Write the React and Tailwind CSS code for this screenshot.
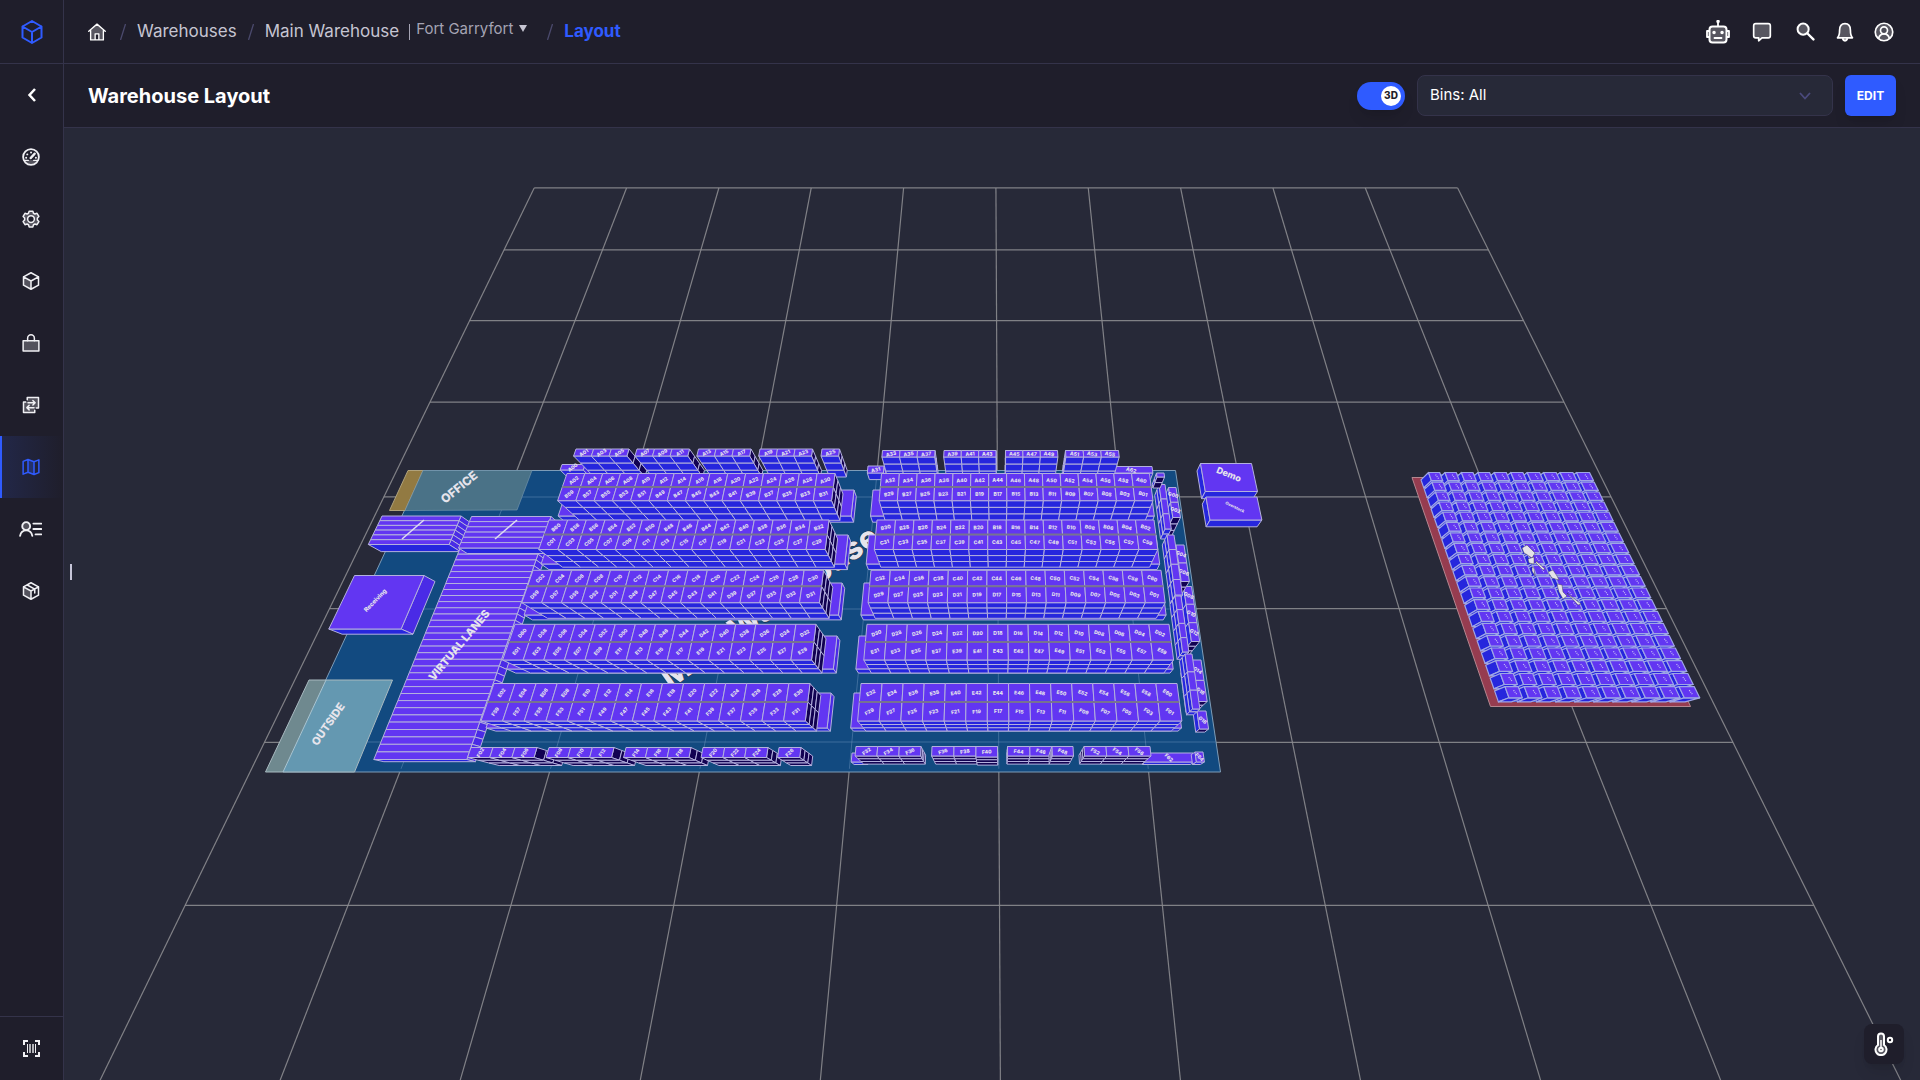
import React from "react";

/* ---------- camera ---------- */
const F = 625;
const SIN = 0.908;
const COS = 0.4187;
const CAM_H = 4.26;
const CX = 998;
const CY = 604;
const ROLL = 0.005;

// world (u across, d distance from the camera, z up) to drawing coordinates
function project(u, d, z) {
  const h = CAM_H - z;
  const depth = d * COS + h * SIN;
  const up = d * SIN - h * COS;
  const y = CY - (F * up) / depth;
  const x = CX + (F * u) / depth + ROLL * (y - CY);
  return [x, y];
}

// drawing coordinates on the plane at height z back to world
function locate(x, y, z) {
  const h = CAM_H - z;
  const t = (CY - y) / F;
  const d = (h * (COS + t * SIN)) / (SIN - t * COS);
  const depth = d * COS + h * SIN;
  return [((x - ROLL * (y - CY) - CX) * depth) / F, d];
}

const pts = (list) => list.map(([x, y]) => x.toFixed(1) + "," + y.toFixed(1)).join(" ");
const tilt = (x, y) => (Math.atan2(x - 998, 892 - y) * 180 * 0.8) / Math.PI;

const TOP = "#6236f2";
const FRONT = "#2626dd";
const SIDE = "#4a2be6";
const DARK = "#120252";
const EDGE = "#b3b0dd";

function Tag({ x, y, size, children, angle }) {
  return (
    <text
      x={x}
      y={y}
      fontSize={size}
      fontWeight="800"
      fill="#e6e4ec"
      textAnchor="middle"
      dominantBaseline="central"
      transform={"rotate(" + (angle === undefined ? tilt(x, y) : angle).toFixed(1) + " " + x.toFixed(1) + " " + y.toFixed(1) + ")"}
    >
      {children}
    </text>
  );
}

/* A block of bins: cols x rows on top, stacked in levels. xl/xr lie on the back edge of the top. */
function Block({ xl, xr, yb, yf, z = 0.275, z0 = 0, cols = 1, rows = 1, levels = 1, top = TOP, front = FRONT, side = SIDE, labels, edge = EDGE, size = 5, midLine }) {
  const [u0, d0] = locate(xl, yb, z);
  const [u1] = locate(xr, yb, z);
  const [, d1] = locate(xl, yf, z);
  const U = (i) => u0 + ((u1 - u0) * i) / cols;
  const D = (j) => d0 + ((d1 - d0) * j) / rows;
  const Z = (k) => z - ((z - z0) * k) / levels;
  const out = [];
  const sideU = u1 < 0 ? u1 : u0 > 0 ? u0 : null;
  if (sideU !== null) {
    for (let j = 0; j < rows; j++)
      for (let k = 0; k < levels; k++)
        out.push(
          <polygon
            key={"s" + j + "-" + k}
            fill={side}
            points={pts([project(sideU, D(j), Z(k)), project(sideU, D(j + 1), Z(k)), project(sideU, D(j + 1), Z(k + 1)), project(sideU, D(j), Z(k + 1))])}
          />
        );
  }
  for (let i = 0; i < cols; i++)
    for (let k = 0; k < levels; k++)
      out.push(
        <polygon
          key={"f" + i + "-" + k}
          fill={front}
          points={pts([project(U(i), d1, Z(k)), project(U(i + 1), d1, Z(k)), project(U(i + 1), d1, Z(k + 1)), project(U(i), d1, Z(k + 1))])}
        />
      );
  for (let j = 0; j < rows; j++)
    for (let i = 0; i < cols; i++)
      out.push(
        <polygon key={"t" + i + "-" + j} fill={top} points={pts([project(U(i), D(j), z), project(U(i + 1), D(j), z), project(U(i + 1), D(j + 1), z), project(U(i), D(j + 1), z)])} />
      );
  if (midLine) {
    const a = project(u0, D(1), z);
    const b = project(u1, D(1), z);
    out.push(<line key="mid" x1={a[0]} y1={a[1]} x2={b[0]} y2={b[1]} stroke="#77738f" strokeWidth="2" />);
  }
  const tags = [];
  if (labels)
    for (let j = 0; j < rows; j++)
      for (let i = 0; i < cols; i++) {
        const [x, y] = project((U(i) + U(i + 1)) / 2, (D(j) + D(j + 1)) / 2, z);
        tags.push(
          <Tag key={"l" + i + "-" + j} x={x} y={y} size={size}>
            {labels(i, j)}
          </Tag>
        );
      }
  return (
    <g>
      <g stroke={edge} strokeWidth="1" strokeLinejoin="round">
        {out}
      </g>
      {tags}
    </g>
  );
}

const pad = (n) => String(n).padStart(2, "0");
const up = (aisle, start) => (i) => aisle + pad(start + i * 2);
const down = (aisle, start) => (i) => aisle + pad(start - i * 2);

const RACKS = [
  { yb: 473.5, yf: 500.7, left: [567, 835], right: [881.5, 1149.5], slab: [567, 854, 873, 1151], slabY: [490, 516], names: [up("A", 2), down("B", 59), up("A", 32), down("B", 29)] },
  { yb: 520, yf: 549.5, left: [549, 829], right: [877, 1154], slab: [551, 848, 869, 1156], slabY: [535, 564], names: [down("B", 60), up("C", 1), down("B", 30), up("C", 31)] },
  { yb: 570.3, yf: 602.7, left: [533, 823.5], right: [871, 1161], slab: [535, 842, 864, 1162], slabY: [583, 615], names: [up("C", 2), down("D", 59), up("C", 32), down("D", 29)] },
  { yb: 624.3, yf: 660, left: [515, 816], right: [867, 1169], slab: [518, 837, 859, 1169], slabY: [636, 669], names: [down("D", 60), up("E", 1), down("D", 30), up("E", 31)] },
  { yb: 683.5, yf: 721, left: [494, 810], right: [861, 1177], slab: [498, 831, 854, 1177], slabY: [693, 728], names: [up("E", 2), down("F", 59), up("E", 32), down("F", 29)] },
];

const BACK_GROUPS = [
  [576, 629, 3], [637, 689.5, 3], [698.5, 751, 3], [760, 812.5, 3], [822, 839.5, 1],
];
const BACK_GROUPS_RIGHT = [
  [1065.5, 1118.5], [1005.5, 1057.5], [944, 996], [882.5, 935],
];
const DOCK_GROUPS = [[471, 537, 3], [549, 614, 3], [626, 691, 3], [703, 768, 3], [779, 801, 1]];
const DOCK_GROUPS_RIGHT = [
  [856, 921, 3, 756], [932, 976, 2, 756], [976, 997.5, 1, 757], [1007.5, 1052, 2, 756], [1052, 1073, 1, 756], [1084, 1150, 3, 756],
];

function Grid() {
  const lines = [];
  const far = 6.926;
  for (let i = -5; i <= 5; i++) {
    const a = project(i, far, 0);
    const b = project(i, far - 9, 0);
    lines.push(<line key={"v" + i} x1={a[0]} y1={a[1]} x2={b[0]} y2={b[1]} />);
  }
  for (let j = 0; j <= 9; j++) {
    const a = project(-5, far - j, 0);
    const b = project(5, far - j, 0);
    lines.push(<line key={"h" + j} x1={a[0]} y1={a[1]} x2={b[0]} y2={b[1]} />);
  }
  return (
    <g stroke="#8b8b8f" strokeOpacity="0.9" strokeWidth="1.2">
      {lines}
    </g>
  );
}

function GridOver() {
  const lines = [];
  for (const [i, a, b] of [[-3, 3.1, 0.75], [-4, 3.1, 0.75], [-2, 3.1, 0.75], [-1, 3.1, 0.75], [0, 3.1, 0.75], [1, 3.1, 0.75]]) {
    const p = project(i, a, 0);
    const q = project(i, b, 0);
    lines.push(<line key={i} x1={p[0]} y1={p[1]} x2={q[0]} y2={q[1]} />);
  }
  return (
    <g stroke="#8fb0d0" strokeOpacity="0.35">
      {lines}
      <line x1="400" y1="497" x2="1178" y2="497" />
      <line x1="350" y1="609" x2="1198" y2="609" />
      <line x1="280" y1="742" x2="1215" y2="742" />
    </g>
  );
}

function Yard() {
  const z = 0.1;
  const [u0, d0] = locate(1428.5, 472.5, z);
  const [u1] = locate(1593, 472.5, z);
  const [, d1] = locate(1500, 700, z);
  const pw = (u1 - u0) / 10;
  const ph = (d1 - d0) / 20;
  const cells = [];
  for (let j = 0; j < 20; j++)
    for (let i = 9; i >= 0; i--) {
      const a = u0 + pw * i;
      const b = a + pw * (0.68 + i * 0.012);
      const p = d0 + ph * j;
      const q = p + ph * 0.84;
      const c = project((a + b) / 2, (p + q) / 2, z);
      cells.push(
        <g key={i + "-" + j}>
          <polygon fill={FRONT} points={pts([project(a, p, z), project(a, q, z), project(a, q, 0), project(a, p, 0)])} />
          <polygon fill={FRONT} points={pts([project(a, q, z), project(b, q, z), project(b, q, 0), project(a, q, 0)])} />
          <polygon fill={TOP} points={pts([project(a, p, z), project(b, p, z), project(b, q, z), project(a, q, z)])} />
          <line x1={c[0]} y1={c[1] - 2} x2={c[0] + 3} y2={c[1] + 2} stroke="#c8c2f5" strokeDasharray="1 1" />
        </g>
      );
    }
  return (
    <g>
      <polygon points="1412,477.5 1588,477.5 1690.5,706.5 1490.5,706.5" fill="#963c50" stroke="#b5868f" />
      <polygon points="1430,474 1586,474 1686,702 1500,702" fill="#4a5fd0" />
      <g stroke="#9fa6e6" strokeWidth="1.2" strokeLinejoin="round">
        {cells}
      </g>
      <g fill="#e4e2e8" stroke="#2b2b35" strokeWidth="0.4">
        <path d="M1522 548 L1527 545 L1535 553 L1532 558 L1526 554 L1524 553 Z" />
        <path d="M1528 559 L1534 557 L1534 564 L1529 563 Z M1532 567 L1534 568 L1535 576 L1532 571 Z" />
        <path d="M1536 561 L1545 569 L1543 570 L1536 563 Z M1548 572 L1553 570 L1557 576 L1559 580 L1552 578 Z" />
        <path d="M1557 584 L1562 585 L1563 592 L1567 596 L1563 599 L1559 592 Z M1567 593 L1581 604 L1578 605 Z" />
      </g>
    </g>
  );
}

function Scene() {
  return (
    <svg
      className="block min-h-0 w-full flex-1"
      viewBox="64 128 1856 952"
      preserveAspectRatio="xMidYMid slice"
      role="img"
      aria-label="Warehouse floor in 3D"
      fontFamily='Inter, "Open Sans", sans-serif'
    >
      <Grid />
      {/* floor and zones */}
      <polygon points="423,470.5 1175.5,470.5 1220.5,772 283,772" fill="#124a80" stroke="#7d9cb8" />
      <GridOver />
      <polygon points="408,470.5 423,470.5 405,510.5 389.5,510.5" fill="#927a42" stroke="#b0a27c" />
      <polygon points="423,470.5 532,470.5 517,510 405,510.5" fill="#4a7287" stroke="#7c9bb0" strokeOpacity="0.6" />
      <polygon points="309,680 326,680 283,772 265.5,772" fill="#6f898f" />
      <polygon points="326,680 392.5,680 354.5,772 283,772" fill="#6498b1" />
      <polygon points="309,680 392.5,680 354.5,772 265.5,772" fill="none" stroke="#a9bac0" />
      <line x1="326" y1="680" x2="283" y2="772" stroke="#a9c4d0" />
      <Tag x={459} y={487} size={12} angle={-39}>OFFICE</Tag>
      <Tag x={328} y={724} size={11} angle={-55}>OUTSIDE</Tag>
      <g stroke="#23232e" strokeWidth="1" paintOrder="stroke">
        <Tag x={769} y={606} size={31} angle={-35}>Main Warehouse</Tag>
      </g>

      {/* receiving side */}
      <Block xl={382} xr={461} yb={516} yf={544.5} z={0.11} rows={6} />
      <Block xl={354.5} xr={424} yb={575.5} yf={629} z={0.1} />
      <Tag x={375} y={600} size={6} angle={-46}>Receiving</Tag>
      <line x1="402" y1="539" x2="424" y2="520" stroke="#dedaf2" strokeWidth="1.6" />
      <Block xl={460} xr={540} yb={548.5} yf={759.5} z={0.075} rows={32} />
      <Block xl={471.5} xr={551} yb={516.5} yf={548} z={0.085} rows={6} />
      <line x1="495" y1="539" x2="517" y2="520" stroke="#dedaf2" strokeWidth="1.6" />
      <Tag x={459} y={645} size={11} angle={-50}>VIRTUAL LANES</Tag>

      {/* back wall */}
      <Block xl={562} xr={585} yb={464.5} yf={470} z={0.09} labels={() => "A00"} />
      <Block xl={868} xr={884} yb={466} yf={473} z={0.09} labels={() => "A31"} />
      <Block xl={1110} xr={1152} yb={466.5} yf={473} z={0.09} labels={() => "A62"} />
      {BACK_GROUPS.map(([a, b, n], g) => (
        <Block key={a} xl={a} xr={b} yb={449} yf={456} cols={n} levels={3} side={DARK} labels={(i) => "A" + pad(1 + g * 6 + i * 2)} />
      ))}
      {BACK_GROUPS_RIGHT.map(([a, b], g) => (
        <Block key={a} xl={a} xr={b} yb={450.5} yf={457} cols={3} levels={3} labels={(i) => "A" + pad(51 - g * 6 + i * 2)} />
      ))}

      {/* racks */}
      {RACKS.map((r) => (
        <g key={r.yb}>
          <Block xl={r.slab[0]} xr={r.slab[1]} yb={r.slabY[0]} yf={r.slabY[1]} z={0.09} />
          <Block xl={r.slab[2]} xr={r.slab[3]} yb={r.slabY[0]} yf={r.slabY[1]} z={0.09} />
          <Block xl={r.left[0]} xr={r.left[1]} yb={r.yb} yf={r.yf} cols={15} rows={2} levels={3} side={DARK} midLine labels={(i, j) => r.names[j](i)} />
          <Block xl={r.right[0]} xr={r.right[1]} yb={r.yb} yf={r.yf} cols={15} rows={2} levels={3} midLine labels={(i, j) => r.names[2 + j](i)} />
        </g>
      ))}

      {/* east wall */}
      <Block xl={1197} xr={1206} yb={711} yf={729} z={0.09} side={FRONT} front={DARK} labels={() => "G18"} />
      <Block xl={1191.5} xr={1201} yb={660} yf={701.5} rows={2} levels={3} side={FRONT} front={DARK} labels={(i, j) => "G" + pad(14 + j * 2)} />
      <Block xl={1183.5} xr={1191.5} yb={586.5} yf={641.5} rows={3} levels={3} side={FRONT} front={DARK} labels={(i, j) => "G" + pad(8 + j * 2)} />
      <Block xl={1176} xr={1184} yb={545} yf={581.5} rows={2} levels={3} side={FRONT} front={DARK} labels={(i, j) => "G" + pad(4 + j * 2)} />
      <Block xl={1168.5} xr={1176} yb={487.5} yf={517.5} rows={2} levels={3} side={FRONT} front={DARK} labels={(i, j) => "G" + pad(j * 2)} />
      <Block xl={1159} xr={1165} yb={484.5} yf={529} z={0.15} rows={3} levels={2} side={FRONT} />
      <Block xl={1167} xr={1174} yb={535} yf={595} z={0.15} rows={4} levels={2} side={FRONT} />
      <Block xl={1175} xr={1181} yb={596} yf={652} z={0.15} rows={4} levels={2} side={FRONT} />
      <Block xl={1185} xr={1192} yb={654} yf={709} z={0.15} rows={3} levels={2} side={FRONT} />
      <Block xl={1156.5} xr={1164} yb={473} yf={477} z={0.15} side={FRONT} front={DARK} levels={2} />

      {/* south wall */}
      {DOCK_GROUPS.map(([a, b, n], g) => (
        <Block key={a} xl={a} xr={b} yb={747.5} yf={757.5} cols={n} levels={3} side={DARK} front={DARK} labels={(i) => "F" + pad(2 + g * 6 + i * 2)} />
      ))}
      <Block xl={852} xr={866} yb={753} yf={762} z={0.09} />
      <Block xl={1144} xr={1193} yb={753} yf={762} z={0.09} labels={() => "F62"} />
      <Block xl={1195} xr={1203} yb={752} yf={762} z={0.09} labels={() => "F64"} />
      {DOCK_GROUPS_RIGHT.map(([a, b, n, yf], g) => (
        <Block key={a} xl={a} xr={b} yb={746.5} yf={yf} cols={n} levels={3} side={DARK} front={DARK} labels={(i) => "F" + pad(32 + g * 4 + i * 2)} />
      ))}

      {/* standalone bins */}
      <Block xl={1200.5} xr={1251.5} yb={463.5} yf={491.5} z={0.1} side={FRONT} />
      <Tag x={1229} y={474} size={9} angle={22}>Demo</Tag>
      <Block xl={1206} xr={1257} yb={497} yf={520} z={0.1} side={FRONT} />
      <Tag x={1235} y={507} size={4} angle={26}>Overstock</Tag>
      <Yard />
    </svg>
  );
}

/* ---------- icons ---------- */
function Icon({ className = "size-5", children }) {
  return (
    <svg className={className} viewBox="0 0 24 24" fill="none" stroke="currentColor" strokeWidth="2" strokeLinejoin="round" strokeLinecap="round" aria-hidden="true">
      {children}
    </svg>
  );
}
const soft = { fill: "currentColor", fillOpacity: 0.25 };

const CubeIcon = ({ className }) => (
  <Icon className={className}>
    <path d="M2 6.5 12 12v11L2 17.5Z" fill="currentColor" fillOpacity="0.25" stroke="none" />
    <path d="M12 1 22 6.5v11L12 23 2 17.5v-11Z M2 6.5 12 12l10-5.5 M12 12v11" />
  </Icon>
);
const LogoIcon = () => (
  <Icon className="size-6">
    <path d="M12 1 21.5 6.5v11L12 23 2.500 17.5v-11Z M2.500 6.500 12 12l9.500-5.500 M12 12v11" />
  </Icon>
);
const HomeIcon = () => (
  <Icon className="size-[18px]">
    <path {...soft} d="M4 9.500V22h5v-7h6v7h5V9.500L12 2Z" stroke="none" />
    <path d="M1 11 12 1.500 23 11 M3.500 9.500V22.500h17V9.500 M9.500 22v-7.500h5V22" strokeWidth="1.800" />
  </Icon>
);
const GaugeIcon = () => (
  <Icon>
    <path {...soft} d="M3 16h18a10 10 0 0 1-18 0Z" stroke="none" />
    <circle cx="12" cy="12" r="10.5" strokeWidth="2.400" />
    <path d="m11.500 13.500 5.500-6" strokeWidth="3" />
    <path d="M5.500 13h.1M7 8.500h.1M12 6h.1M18.500 13h.1" strokeWidth="2.600" />
    <path d="M3 16.500h5.500M15.500 16.500H21" strokeWidth="1.500" />
  </Icon>
);
const GearIcon = () => (
  <Icon>
    <path
      {...soft}
      d="M9.500 1.500h5l.8 2.800 1.900 1 2.800-.9 2.500 4.200-2 2.100v2.600l2 2.100-2.500 4.200-2.800-.9-1.900 1-.8 2.800h-5l-.8-2.800-1.900-1-2.800.9-2.500-4.200 2-2.100v-2.600l-2-2.100L4 4.400l2.800.9 1.900-1Z"
    />
    <circle cx="12" cy="12" r="4.500" fill="#1f1e2b" />
  </Icon>
);
const LockIcon = () => (
  <Icon>
    <path {...soft} d="M1.500 9h21v13.500h-21Z" />
    <path d="M7.500 9V5.500a4.500 4.500 0 0 1 9 0V9" />
  </Icon>
);
const SwapIcon = () => (
  <Icon>
    <path {...soft} stroke="none" d="M7 2h15v14h-5v6H2V8h5Z" />
    <path d="M7 5V2h15v14h-3 M5 8H2v14h15v-3 M8 9h9M14.500 6l3 3-3 3 M16 15.500H7M9.500 12.500l-3 3 3 3" />
  </Icon>
);
const MapIcon = () => (
  <Icon>
    <path {...soft} stroke="none" d="M8 2l8 3v17l-8-3Z" />
    <path d="M1.500 4.500 8 2l8 3 6.500-2.500v17L16 22l-8-3-6.500 2.500Z M8 2v17 M16 5v17" />
  </Icon>
);
const ContactsIcon = () => (
  <svg className="h-4 w-[23px]" viewBox="0 0 32 22" fill="none" stroke="currentColor" strokeWidth="2.600" strokeLinecap="round" aria-hidden="true">
    <circle {...soft} cx="10" cy="7" r="5.500" />
    <path d="M1.500 20.500c1-5 4.500-7.500 8.500-7.500s7.500 2.500 8.500 7.500 M20 3.500h11M20 11h11M23 18.500h8" />
  </svg>
);
const PackageIcon = () => (
  <Icon>
    <path {...soft} stroke="none" d="M2 6.500 12 12v11L2 17.500Z" />
    <path d="M12 1 22 6.500v11L12 23 2 17.500v-11Z M2 6.500 12 12l10-5.500 M12 12v11 M7 4l10 5.500v5" />
  </Icon>
);
const ScanIcon = () => (
  <svg className="size-[17px]" viewBox="0 0 17 17" fill="none" stroke="currentColor" aria-hidden="true">
    <path strokeWidth="2" d="M1 5V1h4M12 1h4v4M16 12v4h-4M5 16H1v-4" />
    <path strokeWidth="1" d="M4.500 4v9M12.500 4v9" />
    <path strokeWidth="2" strokeOpacity="0.7" d="M7 4v9M10 4v9" />
  </svg>
);
const RobotIcon = () => (
  <Icon className="size-6">
    <rect {...soft} x="3.500" y="6.500" width="17" height="16" rx="3" />
    <path d="M12 6V2.500 M3 11H1v6h2 M21 11h2v6h-2 M8.500 18h7" strokeWidth="1.800" />
    <path d="M12 1.500h.1M8 12.500h.1M16 12.500h.1" strokeWidth="3.400" />
  </Icon>
);
const ChatIcon = () => (
  <Icon>
    <path {...soft} d="M4.500 2h15a2.500 2.500 0 0 1 2.500 2.500v12a2.500 2.500 0 0 1-2.500 2.500H12l-4 3.500V19H4.500A2.500 2.500 0 0 1 2 16.500v-12A2.500 2.500 0 0 1 4.500 2Z" />
  </Icon>
);
const SearchIcon = () => (
  <Icon className="size-[19px]">
    <circle {...soft} cx="9" cy="9" r="7" strokeWidth="2.500" />
    <path d="m14.500 14.500 7.500 7.500" strokeWidth="3" />
  </Icon>
);
const BellIcon = () => (
  <Icon>
    <path {...soft} d="M3 19h18c-2-2-2.500-4-2.500-9 0-5-2.500-8-6.500-8s-6.500 3-6.500 8c0 5-.5 7-2.500 9Z" />
    <path d="M9.500 20.500a2.600 2.600 0 0 0 5 0" strokeWidth="2.500" />
  </Icon>
);
const UserIcon = () => (
  <Icon>
    <circle {...soft} cx="12" cy="12" r="10.500" />
    <circle cx="12" cy="10" r="4.200" fill="#4b4b56" />
    <path d="M5.500 19.500c1-3.500 3-5.300 6.500-5.300s5.500 1.800 6.500 5.300" />
  </Icon>
);
const ThermoIcon = () => (
  <svg className="h-6 w-5" viewBox="0 0 20 24" fill="none" stroke="currentColor" strokeWidth="2" aria-hidden="true">
    <path {...soft} d="M4 13V4.500a3 3 0 0 1 6 0V13a5.500 5.500 0 1 1-6 0Z" />
    <circle cx="7" cy="17.500" r="1.800" />
    <path d="M7 8v8" strokeWidth="1.500" />
    <circle cx="16" cy="8" r="2.200" />
  </svg>
);

const NAV = [
  ["Dashboard", GaugeIcon],
  ["Settings", GearIcon],
  ["Products", CubeIcon],
  ["Orders", LockIcon],
  ["Transfers", SwapIcon],
  ["Layout", MapIcon],
  ["Contacts", ContactsIcon],
  ["Packages", PackageIcon],
];

function Sidebar() {
  return (
    <aside className="flex w-16 shrink-0 flex-col border-r border-[#34334a] text-[#f0f0f4]">
      <a href="#home" aria-label="Home" className="flex h-16 items-center justify-center border-b border-[#34334a] text-[#2f5bff]">
        <LogoIcon />
      </a>
      <button type="button" aria-label="Collapse" className="flex h-[62px] items-center justify-center text-white">
        <svg className="size-4" viewBox="0 0 16 16" fill="none" stroke="currentColor" strokeWidth="2.500" aria-hidden="true">
          <path d="M11 2 5.500 8l5.500 6" />
        </svg>
      </button>
      <nav className="flex flex-1 flex-col">
        {NAV.map(([name, Glyph]) => (
          <a
            key={name}
            href={"#" + name.toLowerCase()}
            aria-label={name}
            className={
              name === "Layout"
                ? "flex h-[62px] items-center justify-center border-l-2 border-[#2f5bff] bg-linear-to-r from-[#222748] to-[#1f1e2b] pr-1 text-[#2f5bff]"
                : "flex h-[62px] items-center justify-center pr-0.5"
            }
          >
            <span className="flex items-center justify-center [&>svg]:max-h-[18px]">
              <Glyph />
            </span>
          </a>
        ))}
      </nav>
      <button type="button" aria-label="Scan" className="flex h-16 items-center justify-center border-t border-[#34334a]">
        <ScanIcon />
      </button>
    </aside>
  );
}

const Slash = () => (
  <svg className="h-4 w-1.5 shrink-0" viewBox="0 0 6 16" stroke="#4b4a6d" strokeWidth="1.300" aria-hidden="true">
    <path d="M5.500 0 .5 16" />
  </svg>
);

export default function App() {
  return (
    <div className='flex h-screen w-full overflow-hidden bg-[#1f1e2b] font-[Inter,"Open_Sans",sans-serif] text-white'>
      <Sidebar />
      <div className="flex min-w-0 flex-1 flex-col">
        <header className="flex h-16 shrink-0 items-center justify-between border-b border-[#34334a] pr-6 pl-6">
          <nav aria-label="Breadcrumb" className="flex items-center text-[17px] text-[#c6c5d2]">
            <a href="#home" aria-label="Home" className="text-white">
              <HomeIcon />
            </a>
            <span className="ml-3.5 flex items-center gap-[11px]">
              <Slash />
              <a href="#warehouses">Warehouses</a>
              <Slash />
              <a href="#main">Main Warehouse</a>
            </span>
            <button type="button" className="ml-2.5 flex items-center gap-1.5 pb-1 text-[15px] text-[#a5a4b4]">
              <span className="mt-1 h-4 w-px bg-[#a5a4b4]" />
              Fort Garryfort
              <svg className="mb-0.5 h-[7px] w-2" viewBox="0 0 8 7" fill="#c6c5d2" aria-hidden="true">
                <path d="M0 0h8L4 7Z" />
              </svg>
            </button>
            <span className="ml-5 flex items-center gap-[11px]">
              <Slash />
              <a href="#layout" aria-current="page" className="font-bold text-[#2f5bff]">
                Layout
              </a>
            </span>
          </nav>
          <div className="flex items-center text-white">
            <button type="button" aria-label="Assistant" className="mr-[22px]"><RobotIcon /></button>
            <button type="button" aria-label="Messages" className="mr-6"><ChatIcon /></button>
            <button type="button" aria-label="Search" className="mr-5"><SearchIcon /></button>
            <button type="button" aria-label="Notifications" className="mr-[19px]"><BellIcon /></button>
            <button type="button" aria-label="Account" className="mr-0.5"><UserIcon /></button>
          </div>
        </header>

        <div className="flex h-16 shrink-0 items-center justify-between border-b border-[#34334a] pr-6 pl-6">
          <h1 className="text-xl font-bold">Warehouse Layout</h1>
          <div className="flex items-center gap-3">
            <label className="relative flex h-7 w-12 cursor-pointer items-center justify-end rounded-full bg-[#2f5bff] pr-1 shadow-lg">
              <input type="checkbox" defaultChecked aria-label="3D view" className="absolute inset-0 size-full cursor-pointer opacity-0" />
              <span className="flex size-5 items-center justify-center rounded-full bg-white text-[10px] font-extrabold text-[#1f1e2b]">3D</span>
            </label>
            <div className="relative w-[416px]">
              <select aria-label="Bins" className="h-[41px] w-full appearance-none rounded-lg border border-[#34334a] bg-[#272938] px-3 text-[15px] text-white">
                <option>Bins: All</option>
              </select>
              <svg className="pointer-events-none absolute top-4 right-[22px] h-2.5 w-3" viewBox="0 0 12 10" fill="none" stroke="#4b4a7d" strokeWidth="1.800" aria-hidden="true">
                <path d="m1 2 5 5.500L11 2" />
              </svg>
            </div>
            <button type="button" className="h-[41px] w-[51px] rounded-md bg-[#2f5bff] text-xs font-bold shadow-lg">EDIT</button>
          </div>
        </div>

        <main className="relative flex min-h-0 flex-1 flex-col bg-[#272938]">
          <Scene />
          <span className="absolute top-[436px] left-1.5 h-4 w-0.5 bg-[#c6c5d8]" />
          <button type="button" aria-label="Temperature" className="absolute right-4 bottom-4 flex size-10 items-center justify-center rounded-lg bg-[#1f1e2b] shadow-lg">
            <ThermoIcon />
          </button>
        </main>
      </div>
    </div>
  );
}
